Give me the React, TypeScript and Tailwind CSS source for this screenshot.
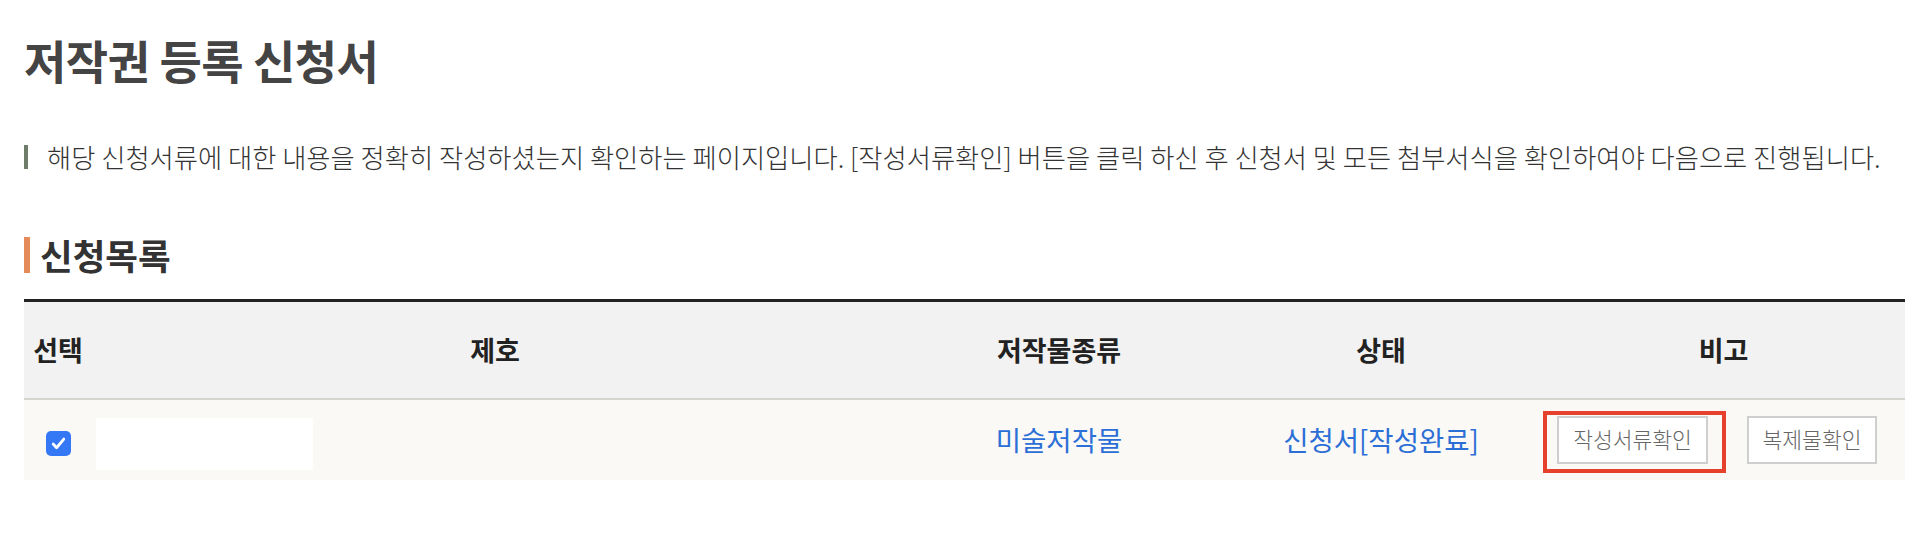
import { FC } from 'react';

const FONT = '"Noto Sans CJK KR", "Noto Sans", sans-serif';

const CheckIcon: FC = () => (
  <svg width="17" height="17" viewBox="0 0 16 16" fill="none">
    <path d="M3 8.5l3.2 3.5L13 3.8" stroke="#fff" strokeWidth="2.6" strokeLinecap="round" strokeLinejoin="round" />
  </svg>
);

const App: FC = () => {
  return (
    <div className="min-h-screen bg-white pl-6 pr-[9px]" style={{ fontFamily: FONT }}>
      <h1 className="pt-[30px] text-[46px] font-bold leading-[58px] tracking-[-0.5px] text-[#444]">
        저작권 등록 신청서
      </h1>

      <div className="mt-[57px] flex h-6 items-center">
        <span className="h-6 w-[4px] bg-[#6e7d6a]" />
        <p className="ml-[19px] whitespace-nowrap text-[26.3px] font-light leading-6 text-[#333]">
          해당 신청서류에 대한 내용을 정확히 작성하셨는지 확인하는 페이지입니다. [작성서류확인] 버튼을 클릭 하신 후 신청서 및 모든 첨부서식을 확인하여야 다음으로 진행됩니다.
        </p>
      </div>

      <div className="mt-[68px] flex h-9 items-center">
        <span className="h-9 w-[6px] bg-[#e58b5a]" />
        <h2 className="ml-[10px] text-[35.5px] font-bold leading-9 text-[#333]">신청목록</h2>
      </div>

      <table className="mt-[26px] w-full table-fixed border-collapse">
        <colgroup>
          <col className="w-[68px]" />
          <col className="w-[806px]" />
          <col className="w-[322px]" />
          <col className="w-[322px]" />
          <col />
        </colgroup>
        <thead>
          <tr className="h-[98px] border-t-[3px] border-b-2 border-t-[#222] border-b-[#d6d6d1] bg-[#f2f2f2] text-[27px] font-bold text-[#222]">
            <th className="whitespace-nowrap p-0 text-center">선택</th>
            <th className="p-0 text-center">제호</th>
            <th className="p-0 text-center">저작물종류</th>
            <th className="p-0 text-center">상태</th>
            <th className="p-0 text-center">비고</th>
          </tr>
        </thead>
        <tbody>
          <tr className="h-[81px] bg-[#faf9f6] text-[27.5px] text-[#2c6fd6]">
            <td className="p-0">
              <div className="mt-[7px] flex justify-center">
                <span className="flex h-[25px] w-[25px] items-center justify-center rounded-[5px] bg-[#3478f6]">
                  <CheckIcon />
                </span>
              </div>
            </td>
            <td className="p-0">
              <div className="ml-1 mt-[9px] h-[52px] w-[217px] bg-white" />
            </td>
            <td className="p-0 text-center">미술저작물</td>
            <td className="p-0 text-center">신청서[작성완료]</td>
            <td className="p-0">
              <div className="flex items-center gap-[39px] pl-[15px]">
                <div className="relative">
                  <button className="flex h-12 w-[151px] items-center justify-center border-2 border-[#cfcfcf] bg-white text-[21.5px] font-light text-[#666]">
                    작성서류확인
                  </button>
                  <span className="pointer-events-none absolute -bottom-[9px] -left-[14px] -right-[18px] -top-[5px] border-4 border-[#e5412d]" />
                </div>
                <button className="flex h-12 w-[130px] items-center justify-center border-2 border-[#cfcfcf] bg-white text-[21.5px] font-light text-[#666]">
                  복제물확인
                </button>
              </div>
            </td>
          </tr>
        </tbody>
      </table>
    </div>
  );
};

export default App;
